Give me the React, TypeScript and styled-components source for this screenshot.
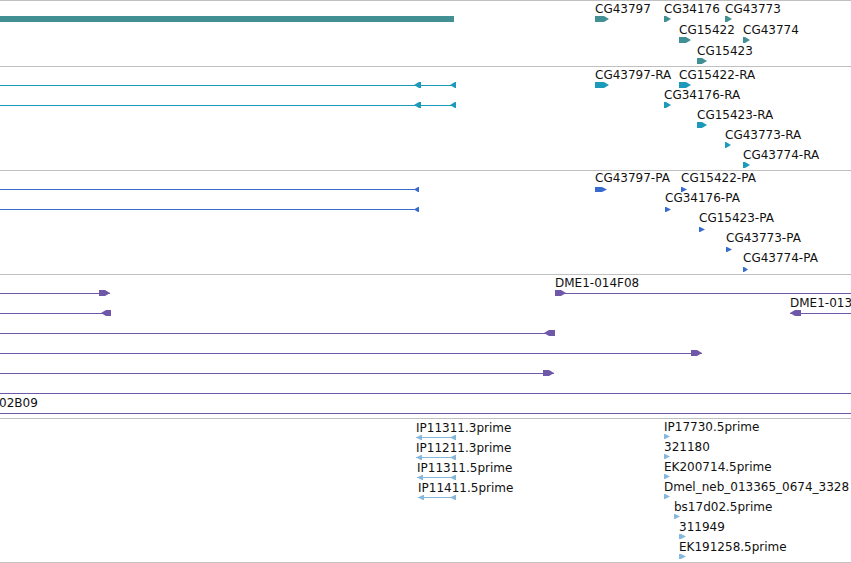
import * as React from "react"
import styled, {createGlobalStyle} from "styled-components";

// page coordinates of every glyph, each track subtracts its own top
type Head = {x: number, w: number, dir: "l" | "r"}
type Gene = {label: string, x: number, y: number, w: number}
type Line = {x1: number, x2: number, y: number, heads: Head[], label?: string, lx?: number}
type TrackData = {
    top: number,
    height: number,
    color: string,
    arrowH: number,
    gap: number,
    bar?: {x: number, w: number, y: number, h: number},
    genes: Gene[],
    lines: Line[],
}

const tracks: TrackData[] = [
    {
        top: 1, height: 65, color: "#428f94", arrowH: 6, gap: 16.5,
        bar: {x: 0, w: 454, y: 16, h: 6},
        genes: [
            {label: "CG43797", x: 595, y: 19, w: 14},
            {label: "CG34176", x: 664, y: 19, w: 7},
            {label: "CG43773", x: 725, y: 19, w: 7},
            {label: "CG15422", x: 679, y: 40, w: 12},
            {label: "CG43774", x: 743, y: 40, w: 7},
            {label: "CG15423", x: 697, y: 61, w: 10},
        ],
        lines: [],
    },
    {
        top: 67, height: 103, color: "#1c9ab9", arrowH: 6, gap: 16.5,
        genes: [
            {label: "CG43797-RA", x: 595, y: 85, w: 14},
            {label: "CG15422-RA", x: 679, y: 85, w: 12},
            {label: "CG34176-RA", x: 664, y: 105, w: 7},
            {label: "CG15423-RA", x: 697, y: 125, w: 10},
            {label: "CG43773-RA", x: 725, y: 145, w: 6},
            {label: "CG43774-RA", x: 743, y: 165, w: 7},
        ],
        lines: [
            {x1: 0, x2: 456, y: 85, heads: [{x: 414, w: 7, dir: "l"}, {x: 450, w: 6, dir: "l"}]},
            {x1: 0, x2: 456, y: 105, heads: [{x: 414, w: 7, dir: "l"}, {x: 450, w: 6, dir: "l"}]},
        ],
    },
    {
        top: 171, height: 103, color: "#376bcd", arrowH: 5, gap: 17,
        genes: [
            {label: "CG43797-PA", x: 595, y: 189, w: 12},
            {label: "CG15422-PA", x: 681, y: 189, w: 6},
            {label: "CG34176-PA", x: 665, y: 209, w: 6},
            {label: "CG15423-PA", x: 699, y: 229, w: 6},
            {label: "CG43773-PA", x: 726, y: 249, w: 6},
            {label: "CG43774-PA", x: 743, y: 269, w: 5},
        ],
        lines: [
            {x1: 0, x2: 419, y: 189, heads: [{x: 414, w: 5, dir: "l"}]},
            {x1: 0, x2: 419, y: 209, heads: [{x: 414, w: 5, dir: "l"}]},
        ],
    },
    {
        top: 275, height: 143, color: "#6f57a9", arrowH: 6, gap: 16.5,
        genes: [],
        lines: [
            {x1: 0, x2: 110, y: 293, heads: [{x: 99, w: 11, dir: "r"}]},
            {x1: 555, x2: 851, y: 293, heads: [{x: 555, w: 11, dir: "r"}], label: "DME1-014F08", lx: 555},
            {x1: 0, x2: 111, y: 313, heads: [{x: 101, w: 10, dir: "l"}]},
            {x1: 790, x2: 851, y: 313, heads: [{x: 790, w: 11, dir: "l"}], label: "DME1-013G04", lx: 790},
            {x1: 0, x2: 555, y: 333, heads: [{x: 544, w: 11, dir: "l"}]},
            {x1: 0, x2: 702, y: 353, heads: [{x: 691, w: 11, dir: "r"}]},
            {x1: 0, x2: 554, y: 373, heads: [{x: 543, w: 11, dir: "r"}]},
            {x1: 0, x2: 851, y: 393, heads: []},
            {x1: 0, x2: 851, y: 413, heads: [], label: "02B09", lx: -1},
        ],
    },
    {
        top: 419, height: 143, color: "#86b8de", arrowH: 5, gap: 15.5,
        genes: [
            {label: "IP17730.5prime", x: 664, y: 436, w: 6},
            {label: "321180", x: 664, y: 456, w: 6},
            {label: "EK200714.5prime", x: 664, y: 476, w: 6},
            {label: "Dmel_neb_013365_0674_3328", x: 664, y: 496, w: 6},
            {label: "bs17d02.5prime", x: 674, y: 516, w: 6},
            {label: "311949", x: 679, y: 536, w: 7},
            {label: "EK191258.5prime", x: 679, y: 556, w: 7},
        ],
        lines: [
            {x1: 416, x2: 456, y: 437, heads: [{x: 416, w: 6, dir: "l"}, {x: 450, w: 6, dir: "l"}], label: "IP11311.3prime", lx: 416},
            {x1: 416, x2: 456, y: 457, heads: [{x: 416, w: 6, dir: "l"}, {x: 450, w: 6, dir: "l"}], label: "IP11211.3prime", lx: 416},
            {x1: 417, x2: 456, y: 477, heads: [{x: 417, w: 6, dir: "l"}, {x: 450, w: 6, dir: "l"}], label: "IP11311.5prime", lx: 417},
            {x1: 418, x2: 456, y: 497, heads: [{x: 418, w: 6, dir: "l"}, {x: 450, w: 6, dir: "l"}], label: "IP11411.5prime", lx: 418},
        ],
    },
]

const GlobalStyle = createGlobalStyle`
  html, body {
    margin: 0;
    padding: 0;
    background: #ffffff;
    overflow: hidden;
  }
`;

const Browser = styled.div`
  width: 851px;
  height: 563px;
  display: flex;
  flex-direction: column;
  font-family: "DejaVu Sans", "Liberation Sans", sans-serif;
  font-size: 12px;
  color: #111;
  border-top: 1px solid #c0c0c0;
  overflow: hidden;
`;

const Track = styled.div<{$h: number}>`
  position: relative;
  flex: none;
  height: ${props => props.$h}px;
  border-bottom: 1px solid #c0c0c0;
  overflow: hidden;
`;

const Label = styled.span<{$x: number, $y: number}>`
  position: absolute;
  left: ${props => props.$x}px;
  top: ${props => props.$y}px;
  line-height: 12px;
  white-space: nowrap;
`;

const Intron = styled.div<{$x: number, $y: number, $w: number, $c: string}>`
  position: absolute;
  left: ${props => props.$x}px;
  top: ${props => props.$y}px;
  width: ${props => props.$w}px;
  height: 1px;
  background: ${props => props.$c};
`;

const Bar = styled.div<{$x: number, $y: number, $w: number, $h: number, $c: string}>`
  position: absolute;
  left: ${props => props.$x}px;
  top: ${props => props.$y}px;
  width: ${props => props.$w}px;
  height: ${props => props.$h}px;
  background: ${props => props.$c};
`;

const ArrowSvg = styled.svg<{$x: number, $y: number}>`
  position: absolute;
  left: ${props => props.$x}px;
  top: ${props => props.$y}px;
  display: block;
`;

const Arrow = ({x, y, w, h, dir, color}: {x: number, y: number, w: number, h: number, dir: "l" | "r", color: string}) => {
    const p = Math.min(5, w - 1)
    const pts = dir == "r"
        ? `0,0 ${w - p},0 ${w},${h / 2} ${w - p},${h} 0,${h}`
        : `0,${h / 2} ${p},0 ${w},0 ${w},${h} ${p},${h}`
    return (
        <ArrowSvg $x={x} $y={y} width={w} height={h} viewBox={`0 0 ${w} ${h}`}>
            <polygon points={pts} fill={color}/>
        </ArrowSvg>
    )
}

const TrackView = ({t}: {t: TrackData}) => {
    const half = Math.floor(t.arrowH / 2)
    return (
        <Track $h={t.height}>
            {t.bar && (
                <Bar $x={t.bar.x} $y={t.bar.y - t.top} $w={t.bar.w} $h={t.bar.h} $c={t.color}/>
            )}
            {t.lines.map((l, i) => (
                <React.Fragment key={"l" + i}>
                    {l.label && <Label $x={l.lx ?? l.x1} $y={Math.round(l.y - t.gap) - t.top}>{l.label}</Label>}
                    <Intron $x={l.x1} $y={l.y - t.top} $w={l.x2 - l.x1} $c={t.color}/>
                    {l.heads.map((hd, j) => (
                        <Arrow key={j} x={hd.x} y={l.y - half - t.top} w={hd.w} h={t.arrowH} dir={hd.dir} color={t.color}/>
                    ))}
                </React.Fragment>
            ))}
            {t.genes.map((g, i) => (
                <React.Fragment key={"g" + i}>
                    <Label $x={g.x} $y={Math.round(g.y - t.gap) - t.top}>{g.label}</Label>
                    <Arrow x={g.x} y={g.y - half - t.top} w={g.w} h={t.arrowH} dir="r" color={t.color}/>
                </React.Fragment>
            ))}
        </Track>
    )
}

const App: React.FC = () => {
    return (
        <>
            <GlobalStyle/>
            <Browser>
                {tracks.map((t, i) => <TrackView key={i} t={t}/>)}
            </Browser>
        </>
    )
}

export default App
